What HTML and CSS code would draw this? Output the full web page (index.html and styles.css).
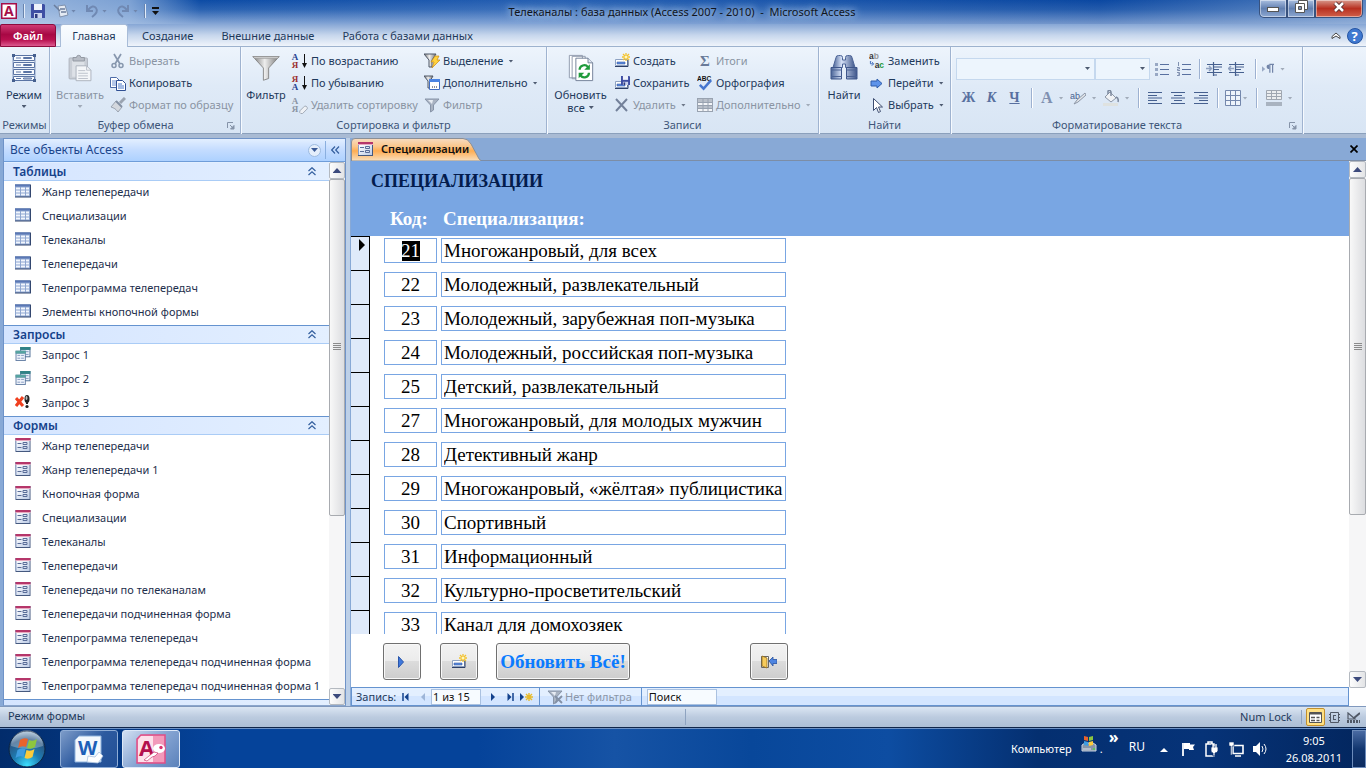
FILE: index.html
```html
<!DOCTYPE html>
<html lang="ru">
<head>
<meta charset="utf-8">
<title>Телеканалы - Microsoft Access</title>
<link rel="stylesheet" href="styles.css">
</head>
<body>
<svg class="defs" aria-hidden="true">
  <defs>
    <linearGradient id="gFunnel" x1="0" x2="1"><stop offset="0" stop-color="#777"/><stop offset=".45" stop-color="#eee"/><stop offset="1" stop-color="#777"/></linearGradient>
    <linearGradient id="gCell" x1="0" y1="0" x2="1" y2="1"><stop offset="0" stop-color="#fff"/><stop offset="1" stop-color="#bccbe6"/></linearGradient>
    <linearGradient id="gTube" x1="0" x2="1"><stop offset="0" stop-color="#4a6497"/><stop offset=".4" stop-color="#d5e1f7"/><stop offset="1" stop-color="#3e568a"/></linearGradient>
    <radialGradient id="gOrb" cx=".5" cy=".95" r=".95"><stop offset="0" stop-color="#3ce0ff"/><stop offset=".4" stop-color="#1d7db4"/><stop offset=".75" stop-color="#2a5683"/><stop offset="1" stop-color="#a9c3d8"/></radialGradient>
    <symbol id="table" viewBox="0 0 16 13"><rect width="16" height="13" fill="#33476f"/><rect x="0" y="0" width="15" height="12" fill="#8ea6d0"/><rect x="0" y="0" width="15" height="2" fill="#5b78b5"/><path d="M1 3h4v2H1zM6 3h4v2H6zM11 3h3v2h-3zM1 6h4v2H1zM6 6h4v2H6zM11 6h3v2h-3zM1 9h4v2H1zM6 9h4v2H6zM11 9h3v2h-3z" fill="#f2f6fd"/></symbol>
    <symbol id="form" viewBox="0 0 15 14"><rect width="15" height="14" fill="#45597f"/><rect width="14" height="13" fill="#8c9fc6"/><rect x="1" y="3" width="13" height="10" fill="url(#gCell)"/><rect width="15" height="2" fill="#b5366a"/><rect y="2" width="15" height="1" fill="#e9a9c0"/><path d="M2 5.5h4M2 9.5h4M7.500 4.500h4v2h-4zM7.500 8.500h4v2h-4z" fill="none" stroke="#5a6d98"/></symbol>
    <symbol id="query" viewBox="0 0 16 15"><path d="M5 0h11v11H5z" fill="#4c6c94"/><path d="M6 3h9v7H6z" fill="#e9f0fa"/><path d="M5 0h11v3H5z" fill="#2f8386"/><path d="M7 5h3M11 5h3M7 8h3M11 8h3" stroke="#8297bd"/><path d="M0 4h11v11H0z" fill="#54709a" opacity=".9"/><path d="M1 7h9v7H1z" fill="#eef3fb"/><path d="M0 4h11v3H0z" fill="#55a3a0"/><path d="M2 9h3M6 9h3M2 12h3M6 12h3" stroke="#8297bd"/></symbol>
    <symbol id="delquery" viewBox="0 0 16 14"><path d="M1 3l7 8M8 2L1 11" stroke="#f0401f" stroke-width="3"/><ellipse cx="12" cy="4" rx="2.500" ry="4" fill="#222"/><ellipse cx="11.500" cy="3" rx="1" ry="2" fill="#bbb"/><path d="M12 6v3" stroke="#222" stroke-width="2"/><circle cx="12" cy="11.500" r="1.600" fill="#222"/></symbol>
    <symbol id="chev" viewBox="0 0 8 9"><path d="M.5 4L4 .7 7.500 4M.5 8L4 4.700 7.500 8" fill="none" stroke="#35609f" stroke-width="1.200"/></symbol>
    <symbol id="launch" viewBox="0 0 8 8"><path d="M.5 6V.5H6" fill="none" stroke="#8593a8"/><path d="M3 3l3 3M7 3.500V7H3.500z" stroke="#8593a8" fill="#8593a8"/></symbol>
    <symbol id="rec" viewBox="0 0 16 16"><path d="M1.500 6.500h12v6h-12z" fill="#fff" stroke="#8fa3c3"/><path d="M1 13.500h13V7" fill="none" stroke="#2c3e66"/><path d="M3 9h8v2H3z" fill="#5b8be0" stroke="#3b5fa5" stroke-width=".6"/></symbol>
    <symbol id="newrec" viewBox="0 0 16 16"><use href="#rec"/><path d="M12 0v8M8 4h8M9 1l6 6M15 1L9 7" stroke="#f3c22e" stroke-width="1.300"/><circle cx="12" cy="4" r="1.500" fill="#fff7bf"/></symbol>
    <symbol id="floppy" viewBox="0 0 14 14"><path d="M0 0h13l1 1v13H0z" fill="#3e4ea3"/><path d="M3 0h8v6H3z" fill="#eef2fb"/><path d="M3 9h8v5H3z" fill="#c9d2ec"/><path d="M4 10h2.500v4H4z" fill="#2d397e"/></symbol>
    <symbol id="funnel" viewBox="0 0 32 28"><path d="M1 1h30L19 14v12l-6 2V14z" fill="url(#gFunnel)" stroke="#808080"/><path d="M1 1h30l-2 2H3z" fill="#d5d5d5" stroke="#888" stroke-width=".6"/></symbol>
    <symbol id="refresh" viewBox="0 0 28 30"><path d="M1.500 1.500h14v24h-14zM4.500 2.500h14v24h-14z" fill="#fff" stroke="#8d98ab"/><path d="M8.500 4.500h13l5 5v19h-18z" fill="#fff" stroke="#6f7d94"/><path d="M21.500 4.500v5h5" fill="#dfe6f0" stroke="#6f7d94"/><path d="M12.500 17a5 5 0 0 1 9-3M22.500 20a5 5 0 0 1-9 3" fill="none" stroke="#1f9b3b" stroke-width="2.400"/><path d="M23.500 11v6h-6zM11.500 26v-6h6z" fill="#1f9b3b"/></symbol>
    <symbol id="bino" viewBox="0 0 28 26"><path d="M6 2.500q0-2 2.500-2h2q2 0 2 2V5h3V2.500q0-2 2-2h2q2.500 0 2.500 2l3 10H15.500V9h-3v3.500H3z" fill="url(#gTube)" stroke="#4c6497"/><path d="M1 12.500h10.500v11.500H1zM16.500 12.500H27v11.500H16.500z" fill="url(#gTube)" stroke="#3e568a"/><path d="M1 21.500h11M16 21.500h11M1 15h11M16 15h11" stroke="#4a6294"/></symbol>
    <symbol id="paste" viewBox="0 0 28 32"><rect x="1.500" y="4.500" width="21" height="24" rx="1" fill="#c9ced6" stroke="#aab0ba"/><rect x="5" y="7" width="14" height="19" fill="#dde1e7"/><path d="M6 4h4a2.500 2.500 0 0 1 5 0h4v4H6z" fill="#b7bcc5" stroke="#8e949e"/><path d="M9.500 13.500h12l5 5v12h-17z" fill="#f4f6f9" stroke="#a6adb8"/><path d="M21.500 13.500v5h5M12 19h8M12 22h11M12 25h11M12 28h11" fill="none" stroke="#b6bcc6"/></symbol>
    <symbol id="viewmode" viewBox="0 0 26 28"><path d="M2 1v26M24 1v26" stroke="#8a9fc4"/><g fill="#f8fbff" stroke="#5a74a4"><path d="M2.500 1.500h21v5h-21zM2.500 8.500h21v5h-21zM2.500 15.500h21v5h-21zM2.500 22.500h21v4h-21z"/><path d="M12.500 3.500h8v1h-8zM12.500 10.500h8v1h-8zM12.500 17.500h8v1h-8zM12.500 24h8v1h-8z"/></g><path d="M5 4h5M5 11h5M5 18h5M5 24.500h5" stroke="#5a74a4"/><path d="M1 0h3v3H1zM22 0h3v3h-3zM1 25h3v3H1zM22 25h3v3h-3z" fill="#46608f"/></symbol>
    <symbol id="cut" viewBox="0 0 16 16"><path d="M4 1l6 10M11 1L5 11" stroke="#8797ae" stroke-width="1.700"/><circle cx="4" cy="12.500" r="2" fill="none" stroke="#8797ae" stroke-width="1.500"/><circle cx="11" cy="12.500" r="2" fill="none" stroke="#8797ae" stroke-width="1.500"/></symbol>
    <symbol id="copy" viewBox="0 0 16 16"><path d="M.5 2.500h6l3 3v7h-9z" fill="#fff" stroke="#4d6ca8"/><path d="M2 6h4M2 8h5M2 10h5" stroke="#6f92d2"/><path d="M6.500 5.500h6l3 3v7h-9z" fill="#fff" stroke="#2f4f93"/><path d="M8 9h4M8 11h6M8 13h6" stroke="#4a78c8"/></symbol>
    <symbol id="brush" viewBox="0 0 16 16"><path d="M15 1l-5 5" stroke="#9aa3b0" stroke-width="3"/><path d="M6 4l6 6-4 5C6 12 4 11 1 10z" fill="#d4d8de" stroke="#9aa3b0"/><path d="M6 4l6 6" stroke="#8390a3" stroke-width="2"/></symbol>
    <symbol id="down" viewBox="0 0 5 16"><path d="M2.500 1v13" stroke="#111"/><path d="M0 10h5L2.500 15z" fill="#111"/></symbol>
    <symbol id="erase" viewBox="0 0 16 16"><path d="M7 12l5-5q2-1 3 1t-1 3l-4 4H8q-2-1-1-3z" fill="#eef1f5" stroke="#9ba4b1"/></symbol>
    <symbol id="selfilter" viewBox="0 0 16 16"><path d="M0 1h12L8 7v7H5V7z" fill="url(#gFunnel)" stroke="#4d5666"/><path d="M11 3h4l-2 4h3l-8 8 2-6H7z" fill="#ffd23d" stroke="#c98a12" stroke-width=".7"/></symbol>
    <symbol id="advfilter" viewBox="0 0 16 16"><path d="M0 1h9L6 6v7H4V6z" fill="url(#gFunnel)" stroke="#4d5666"/><path d="M5.500 4.500h10v10h-10z" fill="#fff" stroke="#416dc0"/><path d="M5 4h11v3H5z" fill="#4b84e2"/><path d="M8 12h1M10 12h1M12 12h1" stroke="#223"/></symbol>
    <symbol id="sfunnel" viewBox="0 0 16 16"><path d="M1 2h14L9.500 8v5l-3 2V8z" fill="#a9b3c2" stroke="#8794a8"/><path d="M4 3h5L8 7z" fill="#e7ecf3"/></symbol>
    <symbol id="cross" viewBox="0 0 16 16"><path d="M2 2l11 12M13 2L2 14" stroke="#73819a" stroke-width="2"/></symbol>
    <symbol id="abc" viewBox="0 0 17 16"><text x="0" y="6" font-family="Liberation Sans" font-size="7" font-weight="bold" fill="#111">ABC</text><path d="M3 10l4 4 8-9" fill="none" stroke="#4676cf" stroke-width="2.600"/></symbol>
    <symbol id="totals" viewBox="0 0 16 16"><rect x=".5" y="1.500" width="15" height="13" fill="#f3f5f8" stroke="#98a2b0"/><path d="M1 2h14v3H1zM1 8h14v3H1z" fill="#b9c0ca"/><path d="M6 2v12M11 2v12M1 5.500h14M1 8.500h14M1 11.500h14" stroke="#98a2b0"/></symbol>
    <symbol id="replace" viewBox="0 0 17 16"><g font-family="Liberation Sans" font-size="9" font-weight="bold"><text x="0" y="6" fill="#333">a</text><text x="5" y="6" fill="#999">b</text><text x="6" y="15" fill="#333">a</text><text x="11" y="15" fill="#1f9b3b">c</text></g><path d="M1.500 8v3h3M3 9l2 2-2 2" fill="none" stroke="#3c69bb"/></symbol>
    <symbol id="goto" viewBox="0 0 16 16"><path d="M2 6h6V4l5 4.500L8 13v-2H2z" fill="#5d93ea" stroke="#2e5cab"/></symbol>
    <symbol id="cursor" viewBox="0 0 16 16"><path d="M4.500 1.500v12l3-3 2 5 2-1-2-4.500h4z" fill="#fff" stroke="#3d4d70"/></symbol>
    <symbol id="bul" viewBox="0 0 14 14"><path d="M5 2.500h9M5 7.500h9M5 12.500h9" stroke="#5870a0"/><path d="M0 1h3v3H0zM0 6h3v3H0zM0 11h3v3H0z" fill="#98a8c4"/></symbol>
    <symbol id="num" viewBox="0 0 14 14"><path d="M5 2.500h9M5 7.500h9M5 12.500h9" stroke="#5870a0"/><path d="M1.500 0v4M0 5.500h2.500v1.500H.5v1.500H3M0 10.500h2.500v3H0M1 12h1.500" fill="none" stroke="#8090b0"/></symbol>
    <symbol id="indent" viewBox="0 0 16 14"><path d="M1 2.500h15M8 5h8M8 7.500h5M1 10.500h15M7 13h4M7.500 0v14" fill="none" stroke="#46608f" stroke-width="1.200" stroke-dasharray="none"/><path d="M0 6.500h5M3 4l2.500 2.500L3 9" fill="none" stroke="#8ea0c0" stroke-width="1.500"/></symbol>
    <symbol id="outdent" viewBox="0 0 16 14"><path d="M1 2.500h15M8 5h8M8 7.500h5M1 10.500h15M7 13h4M7.500 0v14" fill="none" stroke="#46608f" stroke-width="1.200"/><path d="M6 6.500H1M3 4L.5 6.500 3 9" fill="none" stroke="#8ea0c0" stroke-width="1.500"/></symbol>
    <symbol id="all" viewBox="0 0 14 12"><path d="M0 .5h14M0 3.500h9M0 6h14M0 8.500h9M0 11.500h14" stroke="#46608f" stroke-width="1.200"/></symbol>
    <symbol id="alc" viewBox="0 0 14 12"><path d="M0 .5h14M3 3.500h8M0 6h14M3 8.500h8M0 11.500h14" stroke="#46608f" stroke-width="1.200"/></symbol>
    <symbol id="alr" viewBox="0 0 14 12"><path d="M0 .5h14M5 3.500h9M0 6h14M5 8.500h9M0 11.500h14" stroke="#46608f" stroke-width="1.200"/></symbol>
    <symbol id="grid" viewBox="0 0 16 16"><path d="M.5.5h15v15H.5zM5.500 0v16M10.500 0v16M0 5.500h16M0 10.500h16" fill="#eef4fb" stroke="#7488ad"/></symbol>
    <symbol id="altrow" viewBox="0 0 16 16"><path d="M.5.500h15v9H.5zM5.500 0v10M10.500 0v10M0 3.500h16M0 6.500h16" fill="#eceef0" stroke="#a0a7b1"/><path d="M0 12h16v4H0z" fill="#a9b3c0"/></symbol>
    <symbol id="bucket" viewBox="0 0 16 16"><path d="M2 7l5-5 6 6-5 4z" fill="#f0f2f5" stroke="#8d97a7"/><path d="M5 4V1q2-2 3 1v4M13 7q3 1 2 5" fill="none" stroke="#7c899e" stroke-width="1.500"/><path d="M0 13h15v3H0z" fill="#dfe2e0"/></symbol>
    <symbol id="hilite" viewBox="0 0 16 14"><text x="0" y="8" font-family="Liberation Sans" font-size="9" fill="#46608f">ab</text><path d="M15 2l-8 7-3 4 4-2 8-7z" fill="#e3e6ea" stroke="#8d97a7"/></symbol>
    <symbol id="para" viewBox="0 0 13 12"><path d="M0 3l3.500 3L0 9z" fill="#98a8c4"/><path d="M8 1h5M8.500 1v9M11.500 1v9" stroke="#7184a8" stroke-width="1.300"/><path d="M8 1Q5 1 5 3.500T8 6z" fill="#7184a8"/></symbol>
    <symbol id="exit" viewBox="0 0 16 14"><path d="M.5 1.500h7v11h-7z" fill="#fff" stroke="#666"/><path d="M1 1l5 2v10l-5-2z" fill="#f6cb5c" stroke="#906a1a" stroke-width=".8"/><path d="M8 6l4-4v2.500h4v4h-4V11z" fill="#4e85e2" stroke="#2a539f" stroke-width=".8"/></symbol>
    <symbol id="orb" viewBox="0 0 38 38"><circle cx="19" cy="19" r="18" fill="url(#gOrb)" stroke="#0b2340"/><path d="M3 16a16 16 0 0 1 32 0q-16 6-32 0z" fill="#fff" opacity=".28"/><path d="M12 10q4-3 8-1l-2 8q-4-2-8 1z" fill="#e8622c"/><path d="M21 10q4 2 8-1l-2 8q-4 3-8 1z" fill="#8dc63f"/><path d="M9.500 20q4-3 8-1l-2 8q-4-2-8 1z" fill="#3f9de0"/><path d="M18.500 20q4 2 8-1l-2 8q-4 3-8 1z" fill="#fccb3b"/></symbol>
    <symbol id="word" viewBox="0 0 30 30"><path d="M5 2h22v26H1V6z" fill="#f3f8fd" stroke="#8fb3dd"/><text x="4" y="21" font-family="Open Sans" font-size="20" font-weight="bold" fill="#1c5fb8">W</text><path d="M14 22l7 1 4-5 4 4-5 7-11-1z" fill="#fff" stroke="#a9c2e0" stroke-width=".8"/></symbol>
    <symbol id="access" viewBox="0 0 30 30"><path d="M5 1h24v28H1V5z" fill="#f29aba" stroke="#e04d86" stroke-width="1.500"/><path d="M2 6l3-4h12v26H2z" fill="#fde0ea"/><text x="3" y="22" font-family="Open Sans" font-size="22" font-weight="bold" fill="#b30f4d">A</text><ellipse cx="23" cy="14.500" rx="6" ry="4.500" fill="#fff"/><circle cx="25" cy="13.500" r="1.700" fill="#d9306f"/><path d="M8 26l10-8 4 1-3 3-3 1-5 4z" fill="#fff" stroke="#c4215f" stroke-width=".6"/></symbol>
    <symbol id="alogo" viewBox="0 0 16 16"><rect x=".75" y=".75" width="14.500" height="14.500" fill="#fff" stroke="#a50f48" stroke-width="1.500"/><text x="3" y="13" font-family="Open Sans" font-size="14" font-weight="bold" fill="#a50f48">A</text></symbol>
  </defs>
</svg>

<header class="title">
  <div class="quick">
    <svg class="i16"><use href="#alogo"/></svg><i class="qsep"></i>
    <button aria-label="Сохранить"><svg class="i14"><use href="#floppy"/></svg></button>
    <button aria-label="Формат"><svg class="i16" viewBox="0 0 16 16"><path d="M5 3l7-1 3 10-8 2z" fill="#e4eaf3" stroke="#7f91ad"/><path d="M1 2l6 6M7 6h5M8 9h5" stroke="#6b7e9d" stroke-width="1.500"/></svg><i class="dd qd"></i></button>
    <button aria-label="Отменить"><svg class="i16" viewBox="0 0 16 16"><path d="M3 2v6h6M4 7q5-6 8-2t-4 9" fill="none" stroke="#7089b3" stroke-width="2"/></svg><i class="dd qd"></i></button>
    <button aria-label="Вернуть"><svg class="i16" viewBox="0 0 16 16"><path d="M13 2v6H7M12 7Q7 1 4 5t4 9" fill="none" stroke="#7089b3" stroke-width="2"/></svg><i class="dd qd"></i></button>
    <i class="qsep"></i><button class="qmore" aria-label="Настройка панели"><i class="dd"></i></button>
  </div>
  <h1>Телеканалы : база данных (Access 2007 - 2010)&nbsp; -&nbsp; Microsoft Access</h1>
  <div class="winbtns">
    <button aria-label="Свернуть"><svg viewBox="0 0 14 14"><rect x="1.500" y="7.500" width="11" height="4" fill="#fff" stroke="#555"/></svg></button>
    <button aria-label="Восстановить"><svg viewBox="0 0 14 14"><path d="M4.500.500h9v9h-9z" fill="#fff" stroke="#555"/><path d="M1.500 3.500h9v9h-9z" fill="#fff" stroke="#555"/><path d="M4.500 6.500h3v3h-3z" fill="#8295bb" stroke="#555"/></svg></button>
    <button class="close" aria-label="Закрыть"><svg viewBox="0 0 14 14"><path d="M3 3l8 8M11 3l-8 8" stroke="#5a3030" stroke-width="4.500"/><path d="M3 3l8 8M11 3l-8 8" stroke="#fff" stroke-width="2.500"/></svg></button>
  </div>
</header>

<nav class="tabs">
  <button class="file">Файл</button>
  <button class="on">Главная</button>
  <button>Создание</button>
  <button>Внешние данные</button>
  <button>Работа с базами данных</button>
  <span class="fill"></span>
  <button class="mini" aria-label="Свернуть ленту"><svg class="up" viewBox="0 0 10 8"><path d="M1 6.500V4.500L5 1l4 3.500v2L5 4z" fill="#fff" stroke="#444"/></svg></button>
  <button class="mini" aria-label="Справка"><svg class="i16" viewBox="0 0 16 16"><circle cx="8" cy="8" r="7.500" fill="#3f78d0" stroke="#2454a3"/><text x="4.500" y="13" font-family="Open Sans" font-size="13" font-weight="bold" fill="#fff">?</text></svg></button>
</nav>

<section class="ribbon">
  <div class="group g1">
    <div class="body"><button class="big"><svg class="ico"><use href="#viewmode"/></svg>Режим<i class="dd"></i></button></div>
    <div class="glabel">Режимы</div>
  </div>
  <div class="group g2">
    <div class="body">
      <button class="big off"><svg class="ico"><use href="#paste"/></svg>Вставить<i class="dd"></i></button>
      <div class="col">
        <button class="off"><svg class="i16"><use href="#cut"/></svg>Вырезать</button>
        <button><svg class="i16"><use href="#copy"/></svg>Копировать</button>
        <button class="off"><svg class="i16"><use href="#brush"/></svg>Формат по образцу</button>
      </div>
    </div>
    <div class="glabel">Буфер обмена<svg class="launch"><use href="#launch"/></svg></div>
  </div>
  <div class="group g3">
    <div class="body">
      <button class="big"><svg class="ico"><use href="#funnel"/></svg>Фильтр</button>
      <div class="col c1">
        <button><span class="az"><b class="blue">А</b><b class="red">Я</b></span><svg class="dn"><use href="#down"/></svg>По возрастанию</button>
        <button><span class="az"><b class="red">Я</b><b class="blue">А</b></span><svg class="dn"><use href="#down"/></svg>По убыванию</button>
        <button class="off"><span class="az"><b>А</b><b>Я</b></span><svg class="er" viewBox="6 4 10 12"><use href="#erase" width="16" height="16"/></svg>Удалить сортировку</button>
      </div>
      <div class="col">
        <button><svg class="i16"><use href="#selfilter"/></svg>Выделение<i class="dd"></i></button>
        <button><svg class="i16"><use href="#advfilter"/></svg>Дополнительно<i class="dd"></i></button>
        <button class="off"><svg class="i16"><use href="#sfunnel"/></svg>Фильтр</button>
      </div>
    </div>
    <div class="glabel">Сортировка и фильтр</div>
  </div>
  <div class="group g4">
    <div class="body">
      <button class="big"><svg class="ico"><use href="#refresh"/></svg>Обновить<span>все<i class="dd"></i></span></button>
      <div class="col c1">
        <button><svg class="i16"><use href="#newrec"/></svg>Создать</button>
        <button><svg class="i16" viewBox="0 0 16 16"><use href="#rec" width="16" height="16"/><use href="#floppy" x="7" y="1" width="9" height="9"/></svg>Сохранить</button>
        <button class="off"><svg class="i16"><use href="#cross"/></svg>Удалить<i class="dd dark"></i></button>
      </div>
      <div class="col">
        <button class="off"><span class="sigma">Σ</span>Итоги</button>
        <button><svg class="i16"><use href="#abc"/></svg>Орфография</button>
        <button class="off"><svg class="i16"><use href="#totals"/></svg>Дополнительно<i class="dd"></i></button>
      </div>
    </div>
    <div class="glabel">Записи</div>
  </div>
  <div class="group g5">
    <div class="body">
      <button class="big"><svg class="ico"><use href="#bino"/></svg>Найти</button>
      <div class="col">
        <button><svg class="i16"><use href="#replace"/></svg>Заменить</button>
        <button><svg class="i16"><use href="#goto"/></svg>Перейти<i class="dd"></i></button>
        <button><svg class="i16"><use href="#cursor"/></svg>Выбрать<i class="dd"></i></button>
      </div>
    </div>
    <div class="glabel">Найти</div>
  </div>
  <div class="group g6">
    <div class="fmt">
      <div class="frow">
        <span class="combo wide"><select aria-label="Шрифт"><option></option></select><i class="dd"></i></span>
        <span class="combo"><select aria-label="Размер шрифта"><option></option></select><i class="dd"></i></span>
        <button aria-label="Маркеры" class="gap"><svg class="i14"><use href="#bul"/></svg></button>
        <button aria-label="Нумерация" class="gap"><svg class="i14"><use href="#num"/></svg></button>
        <i class="vs"></i>
        <button aria-label="Увеличить отступ"><svg class="i16"><use href="#indent"/></svg></button>
        <button aria-label="Уменьшить отступ"><svg class="i16"><use href="#outdent"/></svg></button>
        <i class="vs"></i>
        <button aria-label="Направление текста"><svg class="i12"><use href="#para"/></svg><i class="dd mute"></i></button>
      </div>
      <div class="frow second">
        <button class="ltr">Ж</button><button class="ltr it">К</button><button class="ltr un">Ч</button>
        <i class="vs"></i>
        <button class="ltr a">А<i class="dd mute"></i></button>
        <button aria-label="Выделение цветом"><svg class="i16"><use href="#hilite"/></svg><i class="dd mute"></i></button>
        <button aria-label="Заливка"><svg class="i16"><use href="#bucket"/></svg><i class="dd mute"></i></button>
        <i class="vs"></i>
        <button aria-label="По левому краю" class="al"><svg class="i14"><use href="#all"/></svg></button>
        <button aria-label="По центру" class="al"><svg class="i14"><use href="#alc"/></svg></button>
        <button aria-label="По правому краю" class="al"><svg class="i14"><use href="#alr"/></svg></button>
        <i class="vs tight"></i>
        <button aria-label="Сетка" class="near"><svg class="i16"><use href="#grid"/></svg><i class="dd mute"></i></button>
        <i class="vs"></i>
        <button aria-label="Чередование строк"><svg class="i16"><use href="#altrow"/></svg><i class="dd mute"></i></button>
      </div>
    </div>
    <div class="glabel">Форматирование текста<svg class="launch"><use href="#launch"/></svg></div>
  </div>
</section>

<main class="work">
  <aside class="nav">
    <div class="navhead"><span>Все объекты Access</span><button class="round" aria-label="Список"><i class="dd"></i></button><button class="fold" aria-label="Свернуть"><svg viewBox="0 0 9 8"><path d="M4 .5L.7 4 4 7.500M8 .5L4.700 4 8 7.500" fill="none" stroke="#35609f" stroke-width="1.200"/></svg></button></div>
    <div class="navbody">
      <div class="list">
        <h2>Таблицы<svg><use href="#chev"/></svg></h2>
        <a href="#"><svg><use href="#table"/></svg>Жанр телепередачи</a>
        <a href="#"><svg><use href="#table"/></svg>Специализации</a>
        <a href="#"><svg><use href="#table"/></svg>Телеканалы</a>
        <a href="#"><svg><use href="#table"/></svg>Телепередачи</a>
        <a href="#"><svg><use href="#table"/></svg>Телепрограмма телепередач</a>
        <a href="#"><svg><use href="#table"/></svg>Элементы кнопочной формы</a>
        <h2>Запросы<svg><use href="#chev"/></svg></h2>
        <a href="#"><svg><use href="#query"/></svg>Запрос 1</a>
        <a href="#"><svg><use href="#query"/></svg>Запрос 2</a>
        <a href="#"><svg><use href="#delquery"/></svg>Запрос 3</a>
        <h2>Формы<svg><use href="#chev"/></svg></h2>
        <a href="#"><svg><use href="#form"/></svg>Жанр телепередачи</a>
        <a href="#"><svg><use href="#form"/></svg>Жанр телепередачи 1</a>
        <a href="#"><svg><use href="#form"/></svg>Кнопочная форма</a>
        <a href="#"><svg><use href="#form"/></svg>Специализации</a>
        <a href="#"><svg><use href="#form"/></svg>Телеканалы</a>
        <a href="#"><svg><use href="#form"/></svg>Телепередачи</a>
        <a href="#"><svg><use href="#form"/></svg>Телепередачи по телеканалам</a>
        <a href="#"><svg><use href="#form"/></svg>Телепередачи подчиненная форма</a>
        <a href="#"><svg><use href="#form"/></svg>Телепрограмма телепередач</a>
        <a href="#"><svg><use href="#form"/></svg>Телепрограмма телепередач подчиненная форма</a>
        <a href="#"><svg><use href="#form"/></svg>Телепрограмма телепередач подчиненная форма 1</a>
        <h2></h2>
      </div>
      <div class="scroll"><button class="sb" aria-label="Вверх"><i class="tri upt"></i></button><div class="thumb"><i class="grip"></i></div><button class="sb end" aria-label="Вниз"><i class="tri"></i></button></div>
    </div>
  </aside>

  <section class="doc">
    <div class="doctabs">
      <div class="dtab"><svg class="tabshape" viewBox="0 0 130 23" aria-hidden="true"><defs><linearGradient id="gTab" x1="0" y1="0" x2="0" y2="1"><stop offset="0" stop-color="#f6dcc2"/><stop offset=".35" stop-color="#fbc78c"/><stop offset=".55" stop-color="#ffad52"/><stop offset="1" stop-color="#f8e0c0"/></linearGradient></defs><path d="M.5 23V4Q.5.500 4 .5H112Q117 .5 120 6L126 17Q128 22 130 22.500V23z" fill="url(#gTab)" stroke="#8b8f96"/></svg><span><svg class="fi"><use href="#form"/></svg>Специализации</span></div>
      <button class="dx" aria-label="Закрыть"><svg viewBox="0 0 8 8"><path d="M.5.500l7 7M7.500.500l-7 7" stroke="#000" stroke-width="1.700"/></svg></button>
    </div>
    <div class="docbody">
      <div class="formwrap">
        <div class="detail">
          <div class="fhead">СПЕЦИАЛИЗАЦИИ</div>
          <table>
            <colgroup><col class="k0"><col class="k1"><col class="k2"><col></colgroup>
            <thead><tr><th></th><th>Код:</th><th>Специализация:</th><th></th></tr></thead>
            <tbody>
              <tr><td><div class="sel"><i></i></div></td><td><input class="code cur" aria-label="Код" value="21"></td><td><input aria-label="Специализация" value="Многожанровый, для всех"></td><td></td></tr>
              <tr><td><div class="sel"></div></td><td><input class="code" aria-label="Код" value="22"></td><td><input aria-label="Специализация" value="Молодежный, развлекательный"></td><td></td></tr>
              <tr><td><div class="sel"></div></td><td><input class="code" aria-label="Код" value="23"></td><td><input aria-label="Специализация" value="Молодежный, зарубежная поп-музыка"></td><td></td></tr>
              <tr><td><div class="sel"></div></td><td><input class="code" aria-label="Код" value="24"></td><td><input aria-label="Специализация" value="Молодежный, российская поп-музыка"></td><td></td></tr>
              <tr><td><div class="sel"></div></td><td><input class="code" aria-label="Код" value="25"></td><td><input aria-label="Специализация" value="Детский, развлекательный"></td><td></td></tr>
              <tr><td><div class="sel"></div></td><td><input class="code" aria-label="Код" value="27"></td><td><input aria-label="Специализация" value="Многожанровый, для молодых мужчин"></td><td></td></tr>
              <tr><td><div class="sel"></div></td><td><input class="code" aria-label="Код" value="28"></td><td><input aria-label="Специализация" value="Детективный жанр"></td><td></td></tr>
              <tr><td><div class="sel"></div></td><td><input class="code" aria-label="Код" value="29"></td><td><input aria-label="Специализация" value="Многожанровый, «жёлтая» публицистика"></td><td></td></tr>
              <tr><td><div class="sel"></div></td><td><input class="code" aria-label="Код" value="30"></td><td><input aria-label="Специализация" value="Спортивный"></td><td></td></tr>
              <tr><td><div class="sel"></div></td><td><input class="code" aria-label="Код" value="31"></td><td><input aria-label="Специализация" value="Информационный"></td><td></td></tr>
              <tr><td><div class="sel"></div></td><td><input class="code" aria-label="Код" value="32"></td><td><input aria-label="Специализация" value="Культурно-просветительский"></td><td></td></tr>
              <tr><td><div class="sel"></div></td><td><input class="code" aria-label="Код" value="33"></td><td><input aria-label="Специализация" value="Канал для домохозяек"></td><td></td></tr>
            </tbody>
          </table>
        </div>
        <div class="ffoot">
          <button aria-label="Следующая"><svg class="i12" viewBox="0 0 12 12"><path d="M2.500.500l5 5.500-5 5.500z" fill="#3f78dc" stroke="#2a56aa"/></svg></button>
          <button class="add" aria-label="Добавить"><svg class="i16"><use href="#newrec"/></svg></button>
          <button class="upd">Обновить Всё!</button>
          <button class="out" aria-label="Выход"><svg class="i16"><use href="#exit"/></svg></button>
        </div>
        <div class="recbar">
          <span class="rl">Запись:</span>
          <button aria-label="Первая"><svg viewBox="0 0 8 8"><path d="M1 0v8" stroke="#12418c" stroke-width="1.500"/><path d="M6.500 0v8L2.500 4z" fill="#12418c"/></svg></button>
          <button aria-label="Предыдущая"><svg viewBox="0 0 8 8"><path d="M6 0v8L2 4z" fill="#9db5d8"/></svg></button>
          <input class="pos" aria-label="Номер записи" value="1 из 15">
          <button aria-label="Следующая запись"><svg viewBox="0 0 8 8"><path d="M2 0v8l4-4z" fill="#12418c"/></svg></button>
          <button aria-label="Последняя"><svg viewBox="0 0 8 8"><path d="M7 0v8" stroke="#12418c" stroke-width="1.500"/><path d="M1.500 0v8l4-4z" fill="#12418c"/></svg></button>
          <button class="nw" aria-label="Новая запись"><svg viewBox="0 0 13 8"><path d="M0 0v8l4-4z" fill="#12418c"/><path d="M9 0v8M5 4h8M6 1l6 6M12 1L6 7" stroke="#e8bb2c" stroke-width="1.400"/></svg></button>
          <span class="nof"><svg class="i16" viewBox="0 0 16 16"><use href="#sfunnel" width="16" height="16"/><path d="M8 7l7 7M15 7l-7 7" stroke="#8390a5" stroke-width="1.800"/></svg>Нет фильтра</span>
          <input class="find" aria-label="Поиск" value="Поиск">
        </div>
      </div>
      <div class="scroll docscroll"><button class="sb" aria-label="Вверх"><i class="tri upt"></i></button><div class="thumb"><i class="grip"></i></div><button class="sb end" aria-label="Вниз"><i class="tri"></i></button></div>
    </div>
  </section>
</main>

<div class="status">
  <span class="smode">Режим формы</span><span class="srest">Num Lock</span>
  <button class="on" aria-label="Режим формы"><svg viewBox="0 0 13 11"><path d="M.5.500h12v10H.5z" fill="#fff" stroke="#555"/><path d="M1 1.500h11" stroke="#555" stroke-width="2"/><path d="M2 5.500h4M2 8.500h4M7.500 5.500h3M7.500 8.500h3" stroke="#555" stroke-width="1.500"/></svg></button>
  <button aria-label="Режим макета"><svg viewBox="0 0 13 11"><path d="M2.500.500h8v10h-8zM5 3.500h3M5 7.500h3M5.500 3v5M1 2.500h2M1 5.500h2M1 8.500h2M10 2.500h2M10 5.500h2M10 8.500h2" fill="none" stroke="#505866"/></svg></button>
  <button aria-label="Конструктор"><svg viewBox="0 0 13 11"><path d="M1 1l7 6H1z" fill="none" stroke="#505866" stroke-width="1.200"/><path d="M13 1L7 6" stroke="#505866" stroke-width="2"/><path d="M0 9.500h13" stroke="#505866" stroke-width="3" stroke-dasharray="2 1"/></svg></button>
</div>

<footer class="task">
  <button class="start" aria-label="Пуск"><svg><use href="#orb"/></svg></button>
  <button class="app" aria-label="Microsoft Word"><svg><use href="#word"/></svg></button>
  <button class="app act" aria-label="Microsoft Access"><svg><use href="#access"/></svg></button>
  <span class="fill"></span>
  <span class="comp">Компьютер</span>
  <svg class="drive" viewBox="0 0 16 18"><path d="M1 10l3-2h8l3 2v6H1z" fill="#8795a8" stroke="#c8d2df"/><path d="M2 14h8" stroke="#dfe6ee"/><circle cx="13" cy="14" r="1" fill="#4bd44b"/><path d="M3 1l4 1v4L3 5z" fill="#e8622c"/><path d="M8 2l4-1v4L8 6z" fill="#8dc63f"/><path d="M3 6l4 1v4l-4-1z" fill="#3f9de0"/><path d="M8 7l4-1v4l-4 1z" fill="#fccb3b"/></svg>
  <span class="dot">.</span><span class="more">»</span>
  <span class="lang">RU</span>
  <svg class="tray" viewBox="0 0 16 16"><path d="M4 11h8L8 7z" fill="#fff"/></svg>
  <svg class="tray" viewBox="0 0 16 16"><path d="M3 2v13" stroke="#fff" stroke-width="1.800"/><path d="M4 2h6v1.500h5L13 6l1 3H9V8H4z" fill="#fff"/></svg>
  <svg class="tray" viewBox="0 0 16 16"><path d="M2 3h8v12H2zM4 1h4v2H4z" fill="none" stroke="#fff" stroke-width="1.500"/><path d="M7 6h7v4q-1 2-3 2v3H9v-3q-2 0-2-2zM8 3v3M12 3v3" fill="#fff" stroke="#0a2f6d" stroke-width=".8"/><path d="M9 3v4M12 3v4" stroke="#fff" stroke-width="1.300"/></svg>
  <svg class="tray" viewBox="0 0 16 16"><path d="M5 4.500h10v8H5zM7 15h6" fill="none" stroke="#fff" stroke-width="1.600"/><path d="M1 1h5v4H4v9H2.500V5H1z" fill="#fff" stroke="#0a2f6d" stroke-width=".6"/></svg>
  <svg class="tray" viewBox="0 0 16 16"><path d="M1 5h3l4-4v14l-4-4H1z" fill="#fff"/><path d="M10 5q2 3 0 6M12 3q4 5 0 10" fill="none" stroke="#fff"/></svg>
  <time class="clock">9:05<br>26.08.2011</time>
  <button class="desk" aria-label="Свернуть все окна"></button>
</footer>
</body>
</html>
```
FILE: styles.css
```css
* { box-sizing: border-box; }
html, body { height: 100%; }
body {
  margin: 0;
  display: flex;
  flex-direction: column;
  overflow: hidden;
  font: 11px/14px "Noto Sans", sans-serif;
  color: #1e395b;
  background: #88a9d6;
}
button, input, select { font: inherit; color: inherit; margin: 0; padding: 0; border: 0; background: none; }
button { white-space: nowrap; }
.defs { position: absolute; width: 0; height: 0; }
.i16 { width: 16px; height: 16px; flex: none; }
.i14 { width: 14px; height: 14px; flex: none; }
.i12 { width: 12px; height: 12px; flex: none; }
.fill { flex: 1; }
.dd { display: inline-block; width: 5px; height: 3px; background: #4d5a70; clip-path: polygon(0 0, 100% 0, 50% 100%); flex: none; }
.dd.mute, .off .dd { background: #a1abb9; }
.off .dd.dark { background: #6e7889; }

.title {
  flex: none;
  height: 24px;
  display: flex;
  align-items: flex-start;
  justify-content: space-between;
  background: linear-gradient(90deg, rgba(190, 210, 236, .8) 0, rgba(170, 196, 230, .7) 130px, rgba(20, 70, 150, 0) 200px, rgba(120, 160, 220, .25) 560px, rgba(0, 50, 140, .15) 1100px, rgba(160, 185, 220, .5) 100%), linear-gradient(#0c4ba5, #2a62b1 40%, #86a6d5);
}
.quick { display: flex; align-items: center; gap: 8px; height: 22px; padding-left: 1px; flex: 1 0 0; }
.quick button { display: flex; align-items: center; gap: 2px; }
.quick .qsep { margin: 0 -2px; }
.qsep { width: 2px; height: 14px; border-left: 1px solid #6984ad; border-right: 1px solid #e2ecf9; }
.quick .qmore { border-top: 2px solid #111; padding: 2px 0 0; }
.qmore .dd { width: 7px; height: 4px; background: #111; }
.qd { background: #6f86ad; }
.title h1 { margin: 0; padding: 5px 12px 0; font: 11px/14px "Noto Sans", sans-serif; color: #10151d; text-shadow: 0 0 6px #c8dcf5, 0 0 10px #b4cdec; white-space: nowrap; }
.winbtns { display: flex; justify-content: flex-end; flex: 1 0 0; padding-right: 3px; }
.winbtns button { width: 28px; height: 18px; border: 1px solid #38527e; border-top: 0; box-shadow: inset 0 0 0 1px rgba(255, 255, 255, .45); background: linear-gradient(#aabfe0, #6280b1 50%, #8da8d2); }
.winbtns button:first-child { border-radius: 0 0 0 5px; }
.winbtns .close { width: 48px; border-radius: 0 0 5px 0; background: linear-gradient(#d89a8c, #b83020 50%, #d0604a); }
.winbtns svg { width: 14px; height: 14px; }

.tabs { flex: none; height: 23px; display: flex; background: linear-gradient(#86a6d5, #c6d6ec 50%, #eff4fb); border-bottom: 1px solid #9db2ce; }
.tabs button { padding: 0 14px; text-align: center; height: 23px; }
.tabs .file { padding: 0; width: 56px; margin-right: 4px; color: #fff; font-weight: 600; border-radius: 2px 3px 0 0; border: 1px solid #8c0b3c; background: linear-gradient(#cf3a74, #a80844 45%, #b80f4e 70%, #dd5a8f); }
.tabs .on { padding: 0; width: 68px; background: linear-gradient(#fafdff, #edf4fc); border: 1px solid #a8bcd8; border-bottom: 0; border-radius: 3px 3px 0 0; }
.tabs .mini { padding: 0 3px; display: flex; align-items: center; }
.up { width: 10px; height: 8px; }

.ribbon { flex: none; height: 91px; display: flex; background: linear-gradient(#edf4fc, #dfeaf7 45%, #d8e5f4); border-bottom: 4px solid #a9bbd4; box-shadow: inset 0 -1px #8ba0bc; }
.group { display: flex; flex-direction: column; border-right: 1px solid #9fb3d0; box-shadow: 1px 0 #f6faff; padding-top: 3px; flex: none; }
.g1 { width: 50px; } .g2 { width: 191px; } .g3 { width: 306px; } .g4 { width: 272px; } .g5 { width: 132px; } .g6 { width: 352px; }
.body { display: flex; height: 67px; }
.big { display: flex; flex-direction: column; align-items: center; line-height: 13px; padding-top: 4px; }
.ico { width: 28px; height: 28px; margin-bottom: 6px; }
.big > .dd { margin-top: 4px; }
.big span { display: flex; align-items: center; gap: 4px; }
.g1 .big { width: 48px; } .g2 .big { width: 60px; } .g3 .big { width: 50px; } .g4 .big { width: 67px; } .g5 .big { width: 50px; }
.off { color: #8a94a3; }
.col { display: flex; flex-direction: column; align-items: flex-start; }
.col button { display: flex; align-items: center; gap: 3px; height: 22px; }
.g3 .c1 { width: 133px; } .g4 .c1 { width: 83px; }
.col .dd { margin-left: 2px; }
.az { display: flex; flex-direction: column; width: 8px; font: 9px/8px "Liberation Serif", serif; }
.blue { color: #1f3f8f; } .red { color: #9b2f2f; }
.dn { width: 5px; height: 16px; margin-right: 1px; }
.er { width: 9px; height: 14px; align-self: flex-end; margin-left: -3px; }
.sigma { width: 16px; text-align: center; font: bold 15px/16px "Liberation Serif", serif; color: #697a99; }
.glabel { display: flex; align-items: center; justify-content: center; height: 16px; color: #3e5679; position: relative; }
.g2 .glabel, .g6 .glabel { padding-right: 19px; }
.launch { position: absolute; right: 5px; bottom: 3px; width: 8px; height: 8px; }
.fmt { height: 67px; padding: 8px 0 0 5px; }
.frow { display: flex; align-items: center; height: 22px; }
.frow.second { margin-top: 7px; gap: 6px; padding-left: 4px; }
.frow button { display: flex; align-items: center; gap: 6px; }
.combo { position: relative; width: 55px; height: 22px; }
.combo.wide { width: 139px; }
.combo select { appearance: none; width: 100%; height: 22px; border: 1px solid #c5d8ee; background: #edf5fd; }
.combo .dd { position: absolute; right: 5px; top: 9px; }
.frow .gap { margin-left: 5px; margin-right: 3px; }
.vs { width: 2px; height: 20px; border-left: 1px solid #9db1d1; border-right: 1px solid #fff; flex: none; margin: 0 5px; }
.frow:first-child .i16 { margin-right: 6px; }
.ltr { font: bold 14px/18px "Liberation Serif", serif; color: #5870a0; width: 17px; justify-content: center; }
.it { font-style: italic; } .un { text-decoration: underline; }
.frow .a { width: auto; font-size: 16px; color: #8090b0; }
.second .vs { margin: 0 2px; }
.second .vs.tight { margin: 0; }
.frow .near { gap: 2px; }
.frow .al { margin-right: 3px; }

.work { flex: 1; min-height: 0; display: flex; padding-left: 3px; }
.nav { width: 343px; flex: none; display: flex; flex-direction: column; border: 1px solid #6f93c8; border-bottom-color: #8ba6cc; margin-right: 5px; box-shadow: 4px 0 #bdd0e8; background: #fff; }
.navhead { flex: none; height: 23px; display: flex; align-items: center; font-size: 12px; color: #1b458b; padding-left: 6px; background: linear-gradient(#e3efff, #c4dcff 50%, #add1ff); border-bottom: 1px solid #6f9dd9; }
.navhead span { flex: 1; }
.round { width: 13px; height: 13px; border: 1px solid #9dbbe0; border-radius: 50%; background: #e4eefb; display: flex; align-items: center; justify-content: center; margin-right: 4px; }
.round .dd { width: 7px; height: 4px; background: #3a5a96; }
.fold { height: 18px; width: 20px; border-left: 1px solid #8aafdf; }
.fold svg { width: 9px; height: 8px; }
.navbody { flex: 1; min-height: 0; display: flex; }
.list { flex: 1; overflow: hidden; }
.list h2 { margin: 0; height: 19px; padding: 0 13px 0 9px; display: flex; align-items: center; justify-content: space-between; font: 600 12px/16px "Noto Sans", sans-serif; color: #15428b; background: linear-gradient(90deg, #d5e5ff, #e3efff); border-top: 1px solid #6593cf; border-bottom: 1px solid #aaccf6; }
.list h2:first-child { border-top-color: #e3efff; }
.list h2 svg { width: 8px; height: 9px; }
.list a { display: flex; align-items: center; height: 24px; padding: 0 0 2px 11px; gap: 11px; color: #1e2f4d; text-decoration: none; white-space: nowrap; }
.list a svg { width: 16px; height: 14px; margin-bottom: 2px; }
.scroll { flex: none; width: 16px; background: #f6f6f7; display: flex; flex-direction: column; }
.sb { height: 17px; flex: none; border: 1px solid #b4b9c0; border-radius: 2px; background: linear-gradient(90deg, #fdfdfd, #e3e4e6); display: flex; align-items: center; justify-content: center; }
.sb.end { margin-top: auto; }
.tri { width: 9px; height: 5px; background: #3c4a7c; clip-path: polygon(0 0, 100% 0, 50% 100%); }
.tri.upt { clip-path: polygon(50% 0, 100% 100%, 0 100%); }
.thumb { height: 62%; border: 1px solid #a8abb0; border-radius: 2px; background: linear-gradient(90deg, #f8f8f8, #dcdde0); display: flex; align-items: center; justify-content: center; }
.docscroll .thumb { height: 64%; }
.grip { width: 8px; height: 8px; background: repeating-linear-gradient(#8b8b8b 0 1px, transparent 1px 2px); }

.doc { flex: 1; min-width: 0; display: flex; flex-direction: column; }
.doctabs { flex: none; height: 23px; display: flex; justify-content: space-between; align-items: center; border-bottom: 1px solid #7c8da6; background: #88a9d6; }
.dtab { position: relative; width: 130px; height: 23px; }
.tabshape { position: absolute; left: 0; top: 0; width: 130px; height: 23px; }
.dtab span { position: relative; display: flex; align-items: center; gap: 8px; height: 23px; padding-left: 7px; font-weight: 600; color: #111; }
.fi { width: 15px; height: 14px; }
.dx { width: 24px; height: 20px; }
.dx svg { width: 8px; height: 8px; }
.docbody { flex: 1; min-height: 0; display: flex; background: #fff; }
.docscroll { width: 17px; margin-bottom: 18px; }
.formwrap { flex: 1; min-width: 0; display: flex; flex-direction: column; }
.detail { flex: 1; min-height: 0; overflow: hidden; }
.fhead { height: 42px; padding: 9px 20px 0; background: #79a6e3; color: #031c4d; font: bold 18px/22px "Liberation Serif", serif; }
.detail table { width: 100%; table-layout: fixed; border-collapse: collapse; }
.k0 { width: 33px; } .k1 { width: 57px; } .k2 { width: 345px; }
.detail th, .detail td { padding: 0; vertical-align: top; text-align: left; }
.detail th { height: 33px; background: #79a6e3; color: #fff; font: bold 19px/32px "Liberation Serif", serif; padding-left: 2px; white-space: nowrap; }
.detail th:nth-child(2) { padding-left: 6px; }
.detail td { height: 34px; padding-top: 2px; }
.detail td:first-child { padding-top: 0; }
.sel { width: 19px; height: 34px; border-top: 1px solid #000; border-right: 1px solid #000; background: #dfeafa; }
.sel i { display: block; width: 6px; height: 12px; margin: 2px 0 0 8px; background: #000; clip-path: polygon(0 0, 100% 50%, 0 100%); }
.detail input { display: block; width: 345px; height: 25px; border: 1px solid #79a6e3; padding: 0 2px; color: #000; font: 19px/23px "Liberation Serif", serif; }
.detail input.code { width: 53px; text-align: center; }
.detail input.cur { color: #fff; background: linear-gradient(#000, #000) center / 18px 20px no-repeat; }
.ffoot { flex: none; height: 53px; display: flex; align-items: flex-start; padding: 9px 0 0 32px; }
.ffoot button { width: 38px; height: 37px; border: 1px solid #707070; border-radius: 3px; background: linear-gradient(#f3f3f3, #ebebeb 50%, #dcdcdc 50%, #cdcdcd); box-shadow: inset 0 0 0 1px #f8f8f8; display: flex; align-items: center; justify-content: center; }
.ffoot .add { margin-left: 19px; }
.ffoot .upd { width: 134px; margin-left: 18px; color: #0a7bff; font: bold 19px/22px "Liberation Serif", serif; }
.ffoot .out { margin-left: 120px; }
.recbar { flex: none; height: 19px; display: flex; align-items: center; padding-left: 4px; border: 1px solid #6593cf; background: linear-gradient(#e3efff 50%, #d3e5ff 50%); }
.recbar button { width: 17px; height: 16px; display: flex; align-items: center; justify-content: center; }
.recbar svg:not(.i16) { width: 8px; height: 8px; }
.recbar .nw svg { width: 13px; }
.rl { width: 41px; }
.recbar input { height: 16px; border: 1px solid #aac1e0; background: #f7fbff; color: #111; padding: 0 1px; }
.pos { width: 50px; margin-right: 3px; }
.nof { display: flex; align-items: center; gap: 2px; height: 17px; color: #8c97a8; border-left: 1px solid #6593cf; border-right: 1px solid #6593cf; padding: 0 9px 0 7px; margin: 0 5px 0 4px; }
.find { width: 70px; }

.status { flex: none; height: 22px; display: flex; align-items: center; padding: 0 3px 0 8px; background: linear-gradient(#dbe6f3, #bccbdf 50%, #adbfd6); border-top: 1px solid #8098bd; border-bottom: 1px solid #10264a; }
.smode { flex: 0 0 50%; height: 16px; border-right: 1px solid #8ea3c0; }
.srest { flex: 1; text-align: right; padding-right: 9px; border-right: 1px solid #8ea3c0; margin-right: 4px; }
.status button { width: 19px; height: 18px; display: flex; align-items: center; justify-content: center; }
.status button.on { border: 1px solid #c2902e; border-radius: 2px; background: #ffe083; }
.status svg { width: 13px; height: 11px; }

.task { flex: none; height: 40px; display: flex; align-items: center; color: #fff; border-top: 1px solid #6d92c6; background: linear-gradient(90deg, #022c6b, #05439a 16%, #05439a 35%, #1653a5 45%, #08479a 55%, #0d4da2 65%, #042f70 76%, #063378 88%, #03265e); }
.start { width: 54px; height: 38px; }
.start svg { width: 38px; height: 38px; }
.app { width: 58px; height: 38px; margin-left: 6px; border: 1px solid #8fadd6; border-radius: 3px; background: linear-gradient(135deg, #7d9cc9, #2d5a9f 50%, #214f96); display: flex; align-items: center; justify-content: center; }
.app.act { margin-left: 4px; background: linear-gradient(135deg, #d3e0f2, #86a5d3 50%, #5b82bb); border-color: #dce8f8; }
.app svg { width: 30px; height: 30px; }
.comp { padding-right: 9px; }
.drive { width: 16px; height: 18px; margin-bottom: 10px; }
.dot { width: 12px; padding-left: 3px; }
.more { width: 20px; font-size: 16px; margin-bottom: 24px; font-weight: bold; }
.lang { width: 27px; font-size: 12px; margin-bottom: 4px; }
.tray { width: 16px; height: 16px; margin-right: 8px; }
.clock { font-size: 11px; line-height: 17px; text-align: center; margin: 0 10px; }
.desk { width: 14px; height: 38px; border: 1px solid #6d8cbb; background: linear-gradient(#4a6ba3, #12366f 50%, #0c2b60); }
```
